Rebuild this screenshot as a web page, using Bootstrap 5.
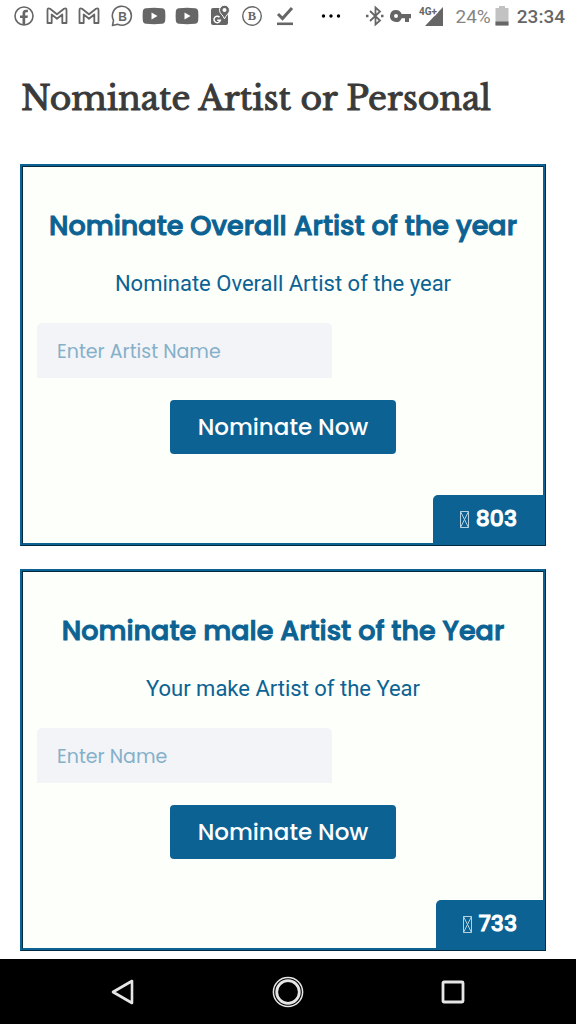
<!DOCTYPE html>
<html lang="en">
<head>
<meta charset="utf-8">
<meta name="viewport" content="width=device-width, initial-scale=1">
<title>Nominate Artist or Personal</title>
<link href="https://cdn.jsdelivr.net/npm/bootstrap@5.3.0/dist/css/bootstrap.min.css" rel="stylesheet">
<style>
:root { --brand: #0b6293; --geo: Poppins, Inter, "Liberation Sans", sans-serif; }
body { background: #fff; font-family: Roboto, "Liberation Sans", sans-serif; }
.status { height: 34px; padding: 0 11px 2px 12px; color: #666; font-size: 19px; line-height: 24px; }
.status svg { display: block; flex: none; }
.tray { flex: 0 0 51.5%; }
.battery-text { color: #858585; }
.battery-text, .clock { padding-top: 2px; }
.clock { font-weight: 500; }
.content { padding: 40px 30px 8px 20px; }
.page-title { font: 400 33px/50px "Libre Baskerville", "Liberation Serif", serif; -webkit-text-stroke: 1px #3a3a3a; color: #3a3a3a; margin: 0 0 40px; padding-left: 1px; white-space: nowrap; }
.stack { gap: 23px; }
.nominee { border: 3px ridge var(--brand); background: #fcfffa; color: var(--brand); height: 382px; padding: 37px 14px 0; text-align: center; }
.nominee h2 { font: 500 27px/44px var(--geo); -webkit-text-stroke: 1px var(--brand); margin: 0 0 20px; white-space: nowrap; display: flex; justify-content: center; }
.nominee p { font-size: 22px; line-height: 32px; margin: 0 0 23px; }
.name-field { display: block; width: 60%; height: 55px; padding: 2px 20px 0; border: 0; border-radius: 5px 5px 0 0; background: #f3f4f8; color: var(--brand); font: 400 19px/30px var(--geo); }
.name-field::placeholder { color: #85b0c9; opacity: 1; }
.send { margin-top: 22px; height: 54px; padding: 0 28px; background: var(--brand); color: #fff; border: 0; border-radius: 4px; font: 500 23px/34px var(--geo); }
.send:hover { background: #095079; color: #fff; }
.votes { right: 0; bottom: 0; height: 48px; padding: 0 26px 0 27px; gap: 7px; background: var(--brand); color: #fff; border-radius: 5px 0 0 0; font: 500 22px/30px var(--geo); -webkit-text-stroke: 1px #fff; }
.android { height: 65px; background: #000; padding: 0 98px; }
.android button { background: none; border: 0; padding: 0; width: 50px; height: 50px; display: grid; place-items: center; }
</style>
</head>
<body class="d-flex flex-column min-vh-100">
<header class="status d-flex align-items-center">
  <div class="tray d-flex align-items-center justify-content-between">
    <svg width="24" height="22" viewBox="-1 0 24 22"><circle cx="11" cy="11" r="9" fill="none" stroke="#666" stroke-width="1.6"/><path d="M9.500 20v-7H7v-2.600h2.500V8.500c0-2.500 1.300-3.700 3.500-3.700h1.900v2.500h-1.400c-1 0-1.300.5-1.300 1.400v1.700h2.700l-.4 2.600h-2.300v7z" fill="#666"/></svg>
    <svg width="24" height="22" viewBox="-1 0 24 22"><path d="M1.500 18V5q0-2.500 2.500-1.200l7 5.500 7-5.500q2.500-1.300 2.500 1.200v13h-4.200V9.500L11 13.700 5.700 9.500V18z" fill="none" stroke="#666" stroke-width="1.8" stroke-linejoin="round"/></svg>
    <svg width="24" height="22" viewBox="-1 0 24 22"><path d="M1.500 18V5q0-2.500 2.500-1.200l7 5.500 7-5.500q2.500-1.300 2.500 1.200v13h-4.200V9.500L11 13.700 5.700 9.500V18z" fill="none" stroke="#666" stroke-width="1.8" stroke-linejoin="round"/></svg>
    <svg width="24" height="22" viewBox="-1 0 24 22"><path d="M1.500 20.500l1-5.200a9.500 9.500 0 1 1 4.200 4z" fill="none" stroke="#666" stroke-width="1.6" stroke-linejoin="round"/><text x="11.500" y="15.500" text-anchor="middle" font-family="Liberation Sans, sans-serif" font-weight="700" font-size="12" fill="#666">B</text></svg>
    <svg width="24" height="22" viewBox="0 0 24 22"><path d="M4 3.200q8-.7 16 0 3 .2 3.200 3.300.4 4.500 0 9-.2 3.100-3.200 3.300-8 .7-16 0-3-.2-3.200-3.300-.4-4.500 0-9Q1 3.400 4 3.200z" fill="#666"/><path d="M9.500 7.500v7l6-3.500z" fill="#fff"/></svg>
    <svg width="24" height="22" viewBox="0 0 24 22"><path d="M4 3.200q8-.7 16 0 3 .2 3.200 3.300.4 4.500 0 9-.2 3.100-3.200 3.300-8 .7-16 0-3-.2-3.200-3.300-.4-4.500 0-9Q1 3.400 4 3.200z" fill="#666"/><path d="M9.500 7.500v7l6-3.500z" fill="#fff"/></svg>
    <svg width="24" height="22" viewBox="-1 0 24 22"><path d="M4 3h13l2 8v7q0 2-2 2H4q-2 0-2-2V5q0-2 2-2z" fill="#666"/><path d="M15.500.3a4.800 4.800 0 0 1 5 5c0 3.200-3.400 4.500-5 8.500-1.600-4-5-5.300-5-8.500a4.800 4.800 0 0 1 5-5z" fill="#666" stroke="#fff"/><circle cx="15.500" cy="5" r="2" fill="#fff"/><path d="M10.500 12.200a3.200 3.200 0 1 0 .8 3H8.200" fill="none" stroke="#fff" stroke-width="1.500"/></svg>
    <svg width="24" height="22" viewBox="-1 0 24 22"><circle cx="11" cy="11" r="9.300" fill="none" stroke="#666" stroke-width="1.400"/><text x="11" y="15.200" text-anchor="middle" font-family="Liberation Serif, serif" font-weight="700" font-size="12.500" fill="#666">B</text></svg>
    <svg width="24" height="22" viewBox="-1 0 24 22"><path d="M4 9l4.500 4.500L18 3" fill="none" stroke="#666" stroke-width="3"/><path d="M3 17.500h16v2.600H3z" fill="#666"/></svg>
  </div>
  <svg class="ms-4" width="20" height="22" viewBox="0 0 20 22"><circle cx="2.500" cy="11" r="1.700"/><circle cx="10" cy="11" r="1.700"/><circle cx="17.500" cy="11" r="1.700"/></svg>
  <div class="d-flex align-items-center gap-1 ms-auto">
    <svg width="20" height="22" viewBox="0 0 20 22"><path d="M4 6l10 9.500-4.500 4V2.500l4.500 4L4 16" fill="none" stroke="#666" stroke-width="1.800"/><path d="M0 9.800h2.500v2.500H0zM15 9.800h2.500v2.500H15z" fill="#666"/></svg>
    <svg width="23" height="22" viewBox="1 0 23 22"><path d="M7 5a6 6 0 1 0 5.600 8.200H16V17h4v-3.800h2V9H12.600A6 6 0 0 0 7 5zm0 4a2 2 0 1 1 0 4 2 2 0 0 1 0-4z" fill="#666"/></svg>
    <svg width="27" height="22" viewBox="0 0 27 22"><path d="M26 2v19H8z" fill="#666"/><text x="2" y="10" font-family="Roboto, sans-serif" font-weight="700" font-size="10" fill="#666" stroke="#fff" stroke-width="2" paint-order="stroke">4G+</text></svg>
    <span class="battery-text ms-2">24%</span>
    <svg width="14" height="22" viewBox="0 0 14 22"><path d="M4 1h6v2h3.500v17.500H.5V3H4z" fill="#c2c2c2"/><path d="M.5 16.500h13v4H.5z" fill="#666"/></svg>
    <span class="clock ms-1">23:34</span>
  </div>
</header>

<main class="content flex-grow-1">
  <h1 class="page-title">Nominate Artist or Personal</h1>
  <div class="stack d-flex flex-column">
    <form class="nominee position-relative">
      <h2>Nominate Overall Artist of the year</h2>
      <p>Nominate Overall Artist of the year</p>
      <input class="name-field" type="text" placeholder="Enter Artist Name" aria-label="Enter Artist Name">
      <button class="btn send" type="button">Nominate Now</button>
      <div class="votes position-absolute d-flex align-items-center">
        <svg width="9" height="17" viewBox="0 0 9 17" fill="none" stroke="#b5d0df"><path d="M.5.500h8v16h-8zM.5.500l8 16M8.500.500l-8 16"/></svg>
        <span>803</span>
      </div>
    </form>
    <form class="nominee position-relative">
      <h2>Nominate male Artist of the Year</h2>
      <p>Your make Artist of the Year</p>
      <input class="name-field" type="text" placeholder="Enter Name" aria-label="Enter Name">
      <button class="btn send" type="button">Nominate Now</button>
      <div class="votes position-absolute d-flex align-items-center">
        <svg width="9" height="17" viewBox="0 0 9 17" fill="none" stroke="#b5d0df"><path d="M.5.500h8v16h-8zM.5.500l8 16M8.500.500l-8 16"/></svg>
        <span>733</span>
      </div>
    </form>
  </div>
</main>

<nav class="android d-flex align-items-center justify-content-between" aria-label="System navigation">
  <button type="button" aria-label="Back"><svg width="26" height="28" viewBox="0 0 26 28"><path d="M22 3v22L3 14z" fill="none" stroke="#e6e6e6" stroke-width="2.600" stroke-linejoin="round"/></svg></button>
  <button type="button" aria-label="Home"><svg width="32" height="32" viewBox="0 0 32 32" fill="none" stroke="#e6e6e6"><circle cx="16" cy="16" r="14.600" stroke-width="1.500"/><circle cx="16" cy="16" r="11.300" stroke-width="2.800"/></svg></button>
  <button type="button" aria-label="Overview"><svg width="24" height="24" viewBox="0 0 24 24"><rect x="2" y="2" width="20" height="20" rx="1" fill="none" stroke="#e6e6e6" stroke-width="2.800"/></svg></button>
</nav>
<script src="https://cdn.jsdelivr.net/npm/bootstrap@5.3.0/dist/js/bootstrap.bundle.min.js"></script>
</body>
</html>
